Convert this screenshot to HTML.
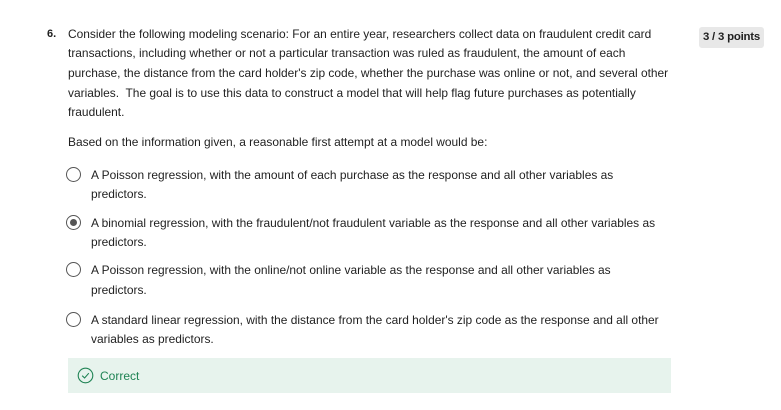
<!DOCTYPE html>
<html><head><meta charset="utf-8"><style>
body{margin:0;width:781px;height:410px;background:#fff;font-family:"Liberation Sans",sans-serif;color:#1f1f1f;font-size:11.95px;position:relative;overflow:hidden}
.l{position:absolute;white-space:nowrap;line-height:14px}
.r{position:absolute;left:66px;width:13px;height:13px;border:1.6px solid #555;border-radius:50%;box-sizing:content-box}
.r.s::after{content:"";position:absolute;left:3px;top:3px;width:7px;height:7px;border-radius:50%;background:#555}
</style></head><body>
<div class="l" style="left:47px;top:27px;font-weight:bold;font-size:11px">6.</div>
<div class="l" style="left:68px;top:27px">Consider the following modeling scenario: For an entire year, researchers collect data on fraudulent credit card</div>
<div class="l" style="left:68px;top:46px">transactions, including whether or not a particular transaction was ruled as fraudulent, the amount of each</div>
<div class="l" style="left:68px;top:66px">purchase, the distance from the card holder's zip code, whether the purchase was online or not, and several other</div>
<div class="l" style="left:68px;top:86px">variables.&nbsp; The goal is to use this data to construct a model that will help flag future purchases as potentially</div>
<div class="l" style="left:68px;top:105px">fraudulent.</div>
<div class="l" style="left:68px;top:135px">Based on the information given, a reasonable first attempt at a model would be:</div>

<div class="r" style="top:167px"></div>
<div class="l" style="left:91px;top:168px">A Poisson regression, with the amount of each purchase as the response and all other variables as</div>
<div class="l" style="left:91px;top:187px">predictors.</div>

<div class="r s" style="top:215px"></div>
<div class="l" style="left:91px;top:216px">A binomial regression, with the fraudulent/not fraudulent variable as the response and all other variables as</div>
<div class="l" style="left:91px;top:235px">predictors.</div>

<div class="r" style="top:262px"></div>
<div class="l" style="left:91px;top:263px">A Poisson regression, with the online/not online variable as the response and all other variables as</div>
<div class="l" style="left:91px;top:283px">predictors.</div>

<div class="r" style="top:312px"></div>
<div class="l" style="left:91px;top:313px">A standard linear regression, with the distance from the card holder's zip code as the response and all other</div>
<div class="l" style="left:91px;top:332px">variables as predictors.</div>

<div style="position:absolute;left:68px;top:358px;width:603px;height:35px;background:#e7f3ed"></div>
<svg style="position:absolute;left:77px;top:367px" width="17" height="17" viewBox="0 0 17 17"><circle cx="8.5" cy="8.5" r="7.3" fill="none" stroke="#1f8354" stroke-width="1.1"/><path d="M5.2 8.7 L7.6 11 L11.8 6.2" fill="none" stroke="#1f8354" stroke-width="1.1"/></svg>
<div class="l" style="left:100px;top:369px;color:#1f8354;font-size:12px">Correct</div>

<div style="position:absolute;left:699px;top:27px;width:65px;height:21px;background:#e8e8e8;border-radius:3px;font-size:11.4px;line-height:21px;text-align:center;color:#1f1f1f;font-weight:bold;letter-spacing:-0.2px">3 / 3 points</div>
</body></html>
